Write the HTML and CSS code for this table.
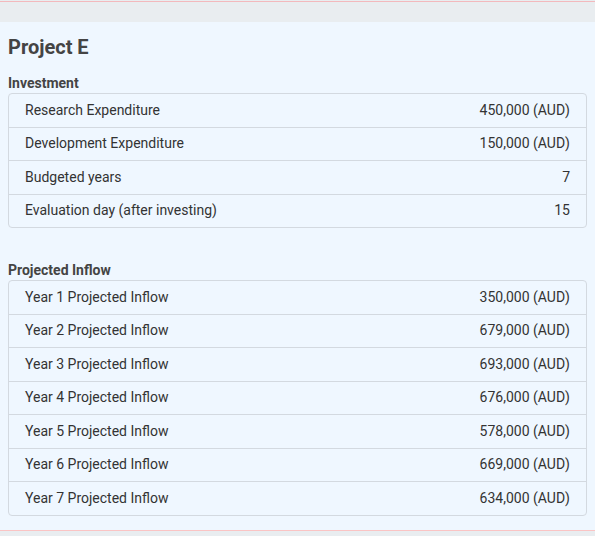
FILE: index.html
```html
<!DOCTYPE html>
<html>
<head>
<meta charset="utf-8">
<link rel="stylesheet" href="styles.css">
</head>
<body>
<div class="topline"></div>
<div class="gap"></div>
<section class="project">
  <h2 class="title">Project E</h2>
  <h3 class="label">Investment</h3>
  <div class="card">
    <div class="row"><span>Research Expenditure</span><span>450,000 (AUD)</span></div>
    <div class="row"><span>Development Expenditure</span><span>150,000 (AUD)</span></div>
    <div class="row"><span>Budgeted years</span><span>7</span></div>
    <div class="row"><span>Evaluation day (after investing)</span><span>15</span></div>
  </div>
  <h3 class="label label-spaced">Projected Inflow</h3>
  <div class="card">
    <div class="row"><span>Year 1 Projected Inflow</span><span>350,000 (AUD)</span></div>
    <div class="row"><span>Year 2 Projected Inflow</span><span>679,000 (AUD)</span></div>
    <div class="row"><span>Year 3 Projected Inflow</span><span>693,000 (AUD)</span></div>
    <div class="row"><span>Year 4 Projected Inflow</span><span>676,000 (AUD)</span></div>
    <div class="row"><span>Year 5 Projected Inflow</span><span>578,000 (AUD)</span></div>
    <div class="row"><span>Year 6 Projected Inflow</span><span>669,000 (AUD)</span></div>
    <div class="row"><span>Year 7 Projected Inflow</span><span>634,000 (AUD)</span></div>
  </div>
</section>
<div class="bottomline"></div>
</body>
</html>
```
FILE: styles.css
```css
html, body {
  margin: 0;
  padding: 0;
}
body {
  background: #e9edf0;
  font-family: Roboto, "Liberation Sans", sans-serif;
  color: #333;
}
.topline {
  height: 1px;
  margin-top: 1px;
  background: #f3b9bd;
}
.gap {
  height: 20px;
}
.project {
  background: #eff7ff;
  padding: 12px 8px 14px;
}
.title {
  margin: 0 0 15px;
  font-size: 20px;
  line-height: 26px;
  font-weight: 700;
  color: #444;
}
.label {
  margin: 0 0 2px;
  font-size: 14px;
  line-height: 16px;
  font-weight: 700;
  color: #444;
}
.label-spaced {
  margin-top: 34px;
}
.card {
  border: 1px solid #d3d9e0;
  border-radius: 4px;
}
.row {
  display: flex;
  justify-content: space-between;
  padding: 7.5px 16px 8.5px;
  font-size: 14px;
  line-height: 16.5px;
  color: #333;
}
.row + .row {
  border-top: 1px solid #d3d9e0;
}
.bottomline {
  height: 1px;
  background: #fbc4c4;
}
```
